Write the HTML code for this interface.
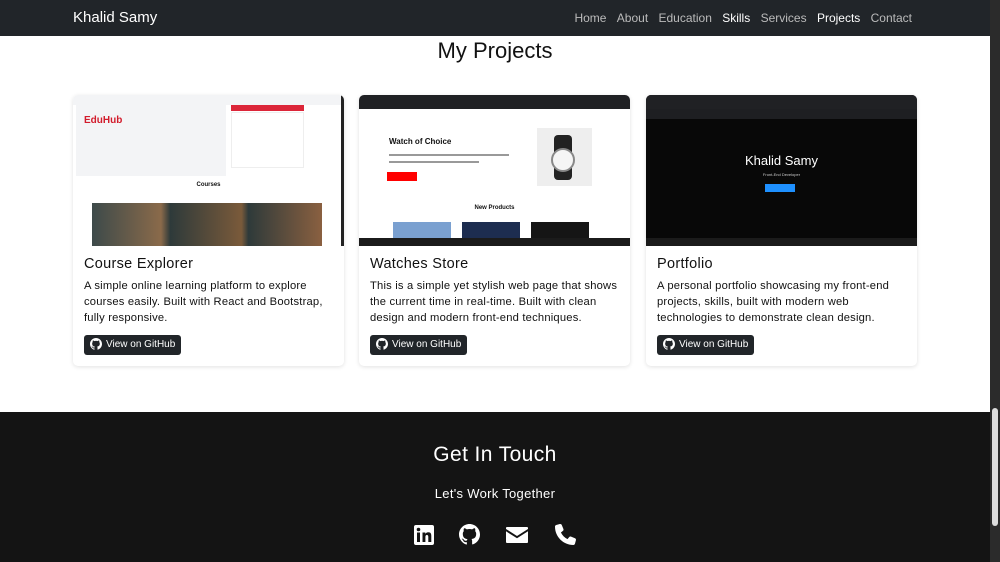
<!DOCTYPE html>
<html><head><meta charset="utf-8"><style>
*{box-sizing:border-box;margin:0;padding:0}
body{width:1000px;height:562px;overflow:hidden;background:#fff;font-family:"Liberation Sans",sans-serif;position:relative;color:#111}
.nav{position:absolute;left:0;top:0;width:990px;height:36px;background:#212529;}
.brand{position:absolute;left:73px;top:9px;color:#fff;font-size:15px}
.links{position:absolute;right:78px;top:11px;font-size:12px;color:#bbb}
.links span{margin-left:7px}
.links b{color:#fff;font-weight:normal}
h2{position:absolute;left:0;width:990px;text-align:center;top:38px;font-size:22px;font-weight:normal}
.card{position:absolute;top:95px;width:271px;height:271px;border-radius:5px;box-shadow:0 1px 4px rgba(0,0,0,.12);background:#fff;overflow:hidden}
.img{height:151px;position:relative;overflow:hidden}
.t{position:absolute;left:11px;top:161px;font-size:14.5px;letter-spacing:.3px}
.d{position:absolute;left:11px;top:183px;width:265px;font-size:11.2px;line-height:16px;letter-spacing:.2px;white-space:nowrap}
.btn{position:absolute;left:11px;top:240px;height:20px;background:#212529;color:#fff;font-size:10px;border-radius:3px;padding:4px 6px 0 6px;display:flex;gap:4px}
.btn svg{margin-top:-1px}
.task{position:absolute;left:0;bottom:0;width:100%;height:8px;background:#1b1b1b}
.chrome{position:absolute;left:0;top:0;width:100%;height:14px;background:#202124}
.foot{position:absolute;left:0;top:412px;width:990px;height:150px;background:#141414;color:#fff;text-align:center}
.sb{position:absolute;right:0;top:0;width:10px;height:562px;background:#2b2b2b}
.thumb{position:absolute;right:2px;top:408px;width:6px;height:118px;background:#ddd;border-radius:3px}
</style></head><body>
<div class="nav"><div class="brand">Khalid Samy</div>
<div class="links"><span>Home</span> <span>About</span> <span>Education</span> <b style="margin-left:7px">Skills</b> <span>Services</span> <b style="margin-left:7px">Projects</b> <span>Contact</span></div></div>
<h2>My Projects</h2>

<div class="card" style="left:73px">
 <div class="img" style="background:#fff">
  <div style="position:absolute;left:0;top:0;width:271px;height:10px;background:#f3f4f6"></div>
  <div style="position:absolute;left:3px;top:5px;width:150px;height:76px;background:#f3f4f6"></div>
  <div style="position:absolute;left:11px;top:20px;color:#d21c2c;font-size:10px;font-weight:bold">EduHub</div>
  <div style="position:absolute;left:158px;top:10px;width:73px;height:6px;background:#dc2639"></div>
  <div style="position:absolute;left:158px;top:17px;width:73px;height:56px;border:1px solid #eee"></div>
  <div style="position:absolute;left:0;top:87px;width:271px;text-align:center;font-size:6px;font-weight:bold">Courses</div>
  <div style="position:absolute;left:19px;top:108px;width:230px;height:43px;background:linear-gradient(90deg,#3d4a4a,#8a6a4a 30%,#2e3a3a 34%,#7a5a3a 65%,#2e3a3a 68%,#8a6040)"></div>
  <div style="position:absolute;right:0;top:0;width:3px;height:151px;background:#222"></div>
 </div>
 <div class="t">Course Explorer</div>
 <div class="d">A simple online learning platform to explore<br>courses easily. Built with React and Bootstrap,<br>fully responsive.</div>
 <div class="btn"><svg width="12" height="12" viewBox="0 0 16 16"><path fill="#fff" d="M8 0C3.6 0 0 3.6 0 8c0 3.5 2.3 6.5 5.5 7.6.4.1.5-.2.5-.4v-1.4c-2.2.5-2.7-1-2.7-1-.4-.9-.9-1.2-.9-1.2-.7-.5.1-.5.1-.5.8.1 1.2.8 1.2.8.7 1.2 1.9.9 2.3.7.1-.5.3-.9.5-1.1-1.8-.2-3.6-.9-3.6-4 0-.9.3-1.6.8-2.1-.1-.2-.4-1 .1-2.1 0 0 .7-.2 2.2.8.6-.2 1.3-.3 2-.3s1.4.1 2 .3c1.5-1 2.2-.8 2.2-.8.4 1.1.2 1.9.1 2.1.5.6.8 1.3.8 2.1 0 3.1-1.9 3.7-3.6 3.9.3.3.5.8.5 1.5v2.2c0 .2.1.5.6.4C13.7 14.5 16 11.5 16 8c0-4.4-3.6-8-8-8z"/></svg>View on GitHub</div>
</div>

<div class="card" style="left:359px">
 <div class="img" style="background:#fff">
  <div class="chrome"></div>
  <div style="position:absolute;left:30px;top:42px;font-size:8px;font-weight:bold">Watch of Choice</div>
  <div style="position:absolute;left:30px;top:59px;width:120px;height:2px;background:#999"></div>
  <div style="position:absolute;left:30px;top:66px;width:90px;height:2px;background:#999"></div>
  <div style="position:absolute;left:28px;top:77px;width:30px;height:9px;background:#f00"></div>
  <div style="position:absolute;left:178px;top:33px;width:55px;height:58px;background:#eee"></div>
  <div style="position:absolute;left:195px;top:40px;width:18px;height:45px;background:#222;border-radius:4px"></div>
  <div style="position:absolute;left:192px;top:53px;width:24px;height:24px;background:#f5f5f5;border:2px solid #888;border-radius:50%"></div>
  <div style="position:absolute;left:0;top:110px;width:271px;text-align:center;font-size:6px;font-weight:bold">New Products</div>
  <div style="position:absolute;left:34px;top:127px;width:58px;height:20px;background:#7aa0d0"></div>
  <div style="position:absolute;left:103px;top:127px;width:58px;height:20px;background:#1d2d50"></div>
  <div style="position:absolute;left:172px;top:127px;width:58px;height:20px;background:#151515"></div>
  <div class="task"></div>
 </div>
 <div class="t">Watches Store</div>
 <div class="d">This is a simple yet stylish web page that shows<br>the current time in real-time. Built with clean<br>design and modern front-end techniques.</div>
 <div class="btn"><svg width="12" height="12" viewBox="0 0 16 16"><path fill="#fff" d="M8 0C3.6 0 0 3.6 0 8c0 3.5 2.3 6.5 5.5 7.6.4.1.5-.2.5-.4v-1.4c-2.2.5-2.7-1-2.7-1-.4-.9-.9-1.2-.9-1.2-.7-.5.1-.5.1-.5.8.1 1.2.8 1.2.8.7 1.2 1.9.9 2.3.7.1-.5.3-.9.5-1.1-1.8-.2-3.6-.9-3.6-4 0-.9.3-1.6.8-2.1-.1-.2-.4-1 .1-2.1 0 0 .7-.2 2.2.8.6-.2 1.3-.3 2-.3s1.4.1 2 .3c1.5-1 2.2-.8 2.2-.8.4 1.1.2 1.9.1 2.1.5.6.8 1.3.8 2.1 0 3.1-1.9 3.7-3.6 3.9.3.3.5.8.5 1.5v2.2c0 .2.1.5.6.4C13.7 14.5 16 11.5 16 8c0-4.4-3.6-8-8-8z"/></svg>View on GitHub</div>
</div>

<div class="card" style="left:646px">
 <div class="img" style="background:#080808">
  <div class="chrome"></div>
  <div style="position:absolute;left:0;top:14px;width:271px;height:10px;background:#1e1f22"></div>
  <div style="position:absolute;left:0;top:58px;width:271px;text-align:center;color:#fff;font-size:13px">Khalid Samy</div>
  <div style="position:absolute;left:0;top:77px;width:271px;text-align:center;color:#ccc;font-size:4px">Front-End Developer</div>
  <div style="position:absolute;left:119px;top:89px;width:30px;height:8px;background:#1e90ff"></div>
  <div class="task"></div>
 </div>
 <div class="t">Portfolio</div>
 <div class="d">A personal portfolio showcasing my front-end<br>projects, skills, built with modern web<br>technologies to demonstrate clean design.</div>
 <div class="btn"><svg width="12" height="12" viewBox="0 0 16 16"><path fill="#fff" d="M8 0C3.6 0 0 3.6 0 8c0 3.5 2.3 6.5 5.5 7.6.4.1.5-.2.5-.4v-1.4c-2.2.5-2.7-1-2.7-1-.4-.9-.9-1.2-.9-1.2-.7-.5.1-.5.1-.5.8.1 1.2.8 1.2.8.7 1.2 1.9.9 2.3.7.1-.5.3-.9.5-1.1-1.8-.2-3.6-.9-3.6-4 0-.9.3-1.6.8-2.1-.1-.2-.4-1 .1-2.1 0 0 .7-.2 2.2.8.6-.2 1.3-.3 2-.3s1.4.1 2 .3c1.5-1 2.2-.8 2.2-.8.4 1.1.2 1.9.1 2.1.5.6.8 1.3.8 2.1 0 3.1-1.9 3.7-3.6 3.9.3.3.5.8.5 1.5v2.2c0 .2.1.5.6.4C13.7 14.5 16 11.5 16 8c0-4.4-3.6-8-8-8z"/></svg>View on GitHub</div>
</div>

<div class="foot">
 <div style="position:absolute;left:0;width:990px;top:31px;font-size:21px;letter-spacing:.4px">Get In Touch</div>
 <div style="position:absolute;left:0;width:990px;top:74px;font-size:13px;letter-spacing:.3px">Let's Work Together</div>
 <svg style="position:absolute;left:414px;top:113px" width="20" height="20" viewBox="0 0 20 20"><rect width="20" height="20" rx="2" fill="#fff"/><rect x="3" y="7.5" width="3" height="9.5" fill="#141414"/><circle cx="4.5" cy="4.5" r="1.8" fill="#141414"/><path d="M8.5 7.5h2.8v1.4c.5-.9 1.6-1.6 3-1.6 2.6 0 3 1.7 3 3.9V17h-3v-5c0-1.1-.2-2-1.4-2s-1.5.9-1.5 2v5H8.5z" fill="#141414"/></svg>
 <svg style="position:absolute;left:459px;top:112px" width="21" height="21" viewBox="0 0 16 16"><path fill="#fff" d="M8 0C3.6 0 0 3.6 0 8c0 3.5 2.3 6.5 5.5 7.6.4.1.5-.2.5-.4v-1.4c-2.2.5-2.7-1-2.7-1-.4-.9-.9-1.2-.9-1.2-.7-.5.1-.5.1-.5.8.1 1.2.8 1.2.8.7 1.2 1.9.9 2.3.7.1-.5.3-.9.5-1.1-1.8-.2-3.6-.9-3.6-4 0-.9.3-1.6.8-2.1-.1-.2-.4-1 .1-2.1 0 0 .7-.2 2.2.8.6-.2 1.3-.3 2-.3s1.4.1 2 .3c1.5-1 2.2-.8 2.2-.8.4 1.1.2 1.9.1 2.1.5.6.8 1.3.8 2.1 0 3.1-1.9 3.7-3.6 3.9.3.3.5.8.5 1.5v2.2c0 .2.1.5.6.4C13.7 14.5 16 11.5 16 8c0-4.4-3.6-8-8-8z"/></svg>
 <svg style="position:absolute;left:506px;top:115px" width="22" height="16" viewBox="0 0 22 16"><path d="M1 0h20a1 1 0 0 1 1 1v1L11 9 0 2V1a1 1 0 0 1 1-1z" fill="#fff"/><path d="M0 4.3l11 7 11-7V15a1 1 0 0 1-1 1H1a1 1 0 0 1-1-1z" fill="#fff"/></svg>
 <svg style="position:absolute;left:555px;top:112px" width="21" height="21" viewBox="0 0 512 512"><path fill="#fff" d="M164.9 24.6c-7.7-18.6-28-28.5-47.4-23.2l-88 24C12.1 30.2 0 46 0 64c0 247.4 200.6 448 448 448 18 0 33.8-12.1 38.6-29.5l24-88c5.3-19.4-4.6-39.7-23.2-47.4l-96-40c-16.3-6.8-35.2-2.1-46.3 11.6L304.7 368C234.3 334.7 177.3 277.7 144 207.3l49.3-40.3c13.7-11.2 18.4-30 11.6-46.3l-40-96z"/></svg>
</div>
<div class="sb"><div class="thumb"></div></div>
</body></html>
